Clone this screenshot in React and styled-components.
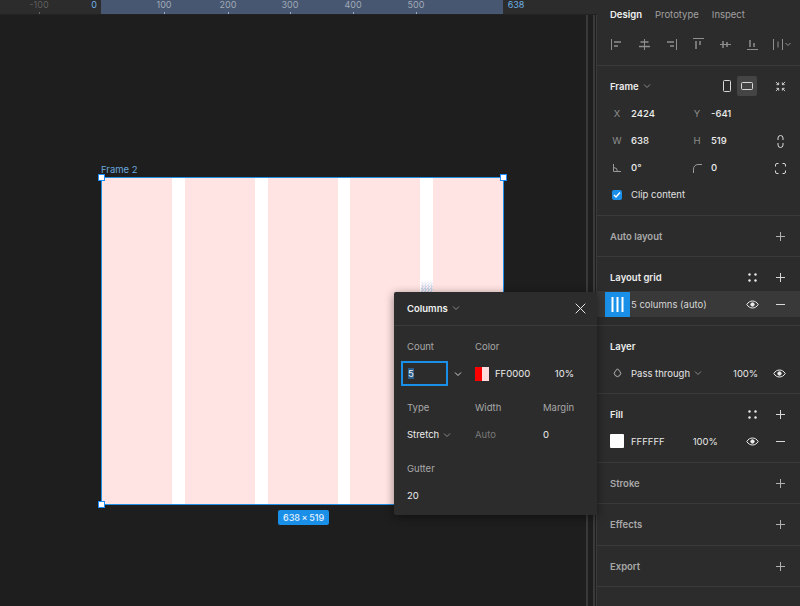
import React from "react";
import styled, { createGlobalStyle } from "styled-components";

const GlobalStyle = createGlobalStyle`
  html, body { margin: 0; padding: 0; background: #1e1e1e; }
  body { font-family: Inter, "Liberation Sans", sans-serif; font-size: 9.5px; }
`;

const Screen = styled.div`
  width: 800px;
  height: 606px;
  display: flex;
  overflow: hidden;
  position: relative;
  background: #1e1e1e;
`;

const Workspace = styled.div`
  width: 597px;
  flex: none;
  display: flex;
  flex-direction: column;
`;

const Ruler = styled.div`
  height: 15px;
  flex: none;
  box-sizing: border-box;
  background: #2c2c2c;
  border-bottom: 1px solid #222;
  position: relative;
`;

const RulerSpan = styled.div`
  position: absolute;
  left: 101px;
  width: 402px;
  top: 0;
  bottom: 0;
  background: #475771;
`;

const Tick = styled.span`
  position: absolute;
  top: 0;
  transform: translateX(-50%);
  font-size: 9px;
  line-height: 9px;
  color: ${(p) => (p.$blue ? "#6eb1e8" : p.$inner ? "#a0a9b6" : "#5f5f5f")};
`;

const TickMark = styled.i`
  position: absolute;
  bottom: 0;
  width: 1px;
  height: 2px;
  background: ${(p) => (p.$inner ? "#a4acb9" : "#666")};
`;

const WorkBody = styled.div`
  flex: 1;
  display: flex;
`;

const Canvas = styled.div`
  flex: 1;
  position: relative;
`;

const FrameName = styled.div`
  position: absolute;
  left: 101px;
  top: 149px;
  font-size: 9.5px;
  line-height: 12px;
  color: #6aa6dc;
`;

const Frame = styled.div`
  position: absolute;
  left: 101px;
  top: 162px;
  width: 403px;
  height: 328px;
  box-sizing: border-box;
  display: flex;
  justify-content: space-between;
  background: #fff;
  border: 1px solid #1f8fe8;
`;

const GridColumn = styled.div`
  width: 70px;
  background: #ffe4e3;
`;

const Handle = styled.span`
  position: absolute;
  width: 5px;
  height: 5px;
  background: #fff;
  border: 1px solid #1a8cff;
  ${(p) => (p.$top ? "top: -4px;" : "bottom: -4px;")}
  ${(p) => (p.$left ? "left: -4px;" : "right: -4px;")}
`;

const CursorSpeck = styled.span`
  position: absolute;
  left: 421px;
  top: 265px;
  width: 12px;
  height: 12px;
  background: repeating-conic-gradient(#c4d6ea 0 25%, #ffe9ef 0 50%) 0 0 / 3px 3px;
  mask-image: linear-gradient(transparent, #000 70%);
`;

const SizeBadge = styled.div`
  position: absolute;
  left: 278px;
  top: 495px;
  height: 15px;
  padding: 0 5px;
  border-radius: 2px;
  background: #1a8fe8;
  color: #e4f1fc;
  font-size: 9px;
  line-height: 15px;
  font-weight: 500;
  white-space: nowrap;
`;

const ScrollGutter = styled.div`
  width: 11px;
  flex: none;
  display: flex;
  justify-content: space-between;
  border-left: 2px solid #3a3a3a;
  border-right: 1px solid #3a3a3a;
  box-sizing: border-box;
  padding-left: 5px;
`;

const ScrollRail = styled.i`
  width: 2px;
  background: #3a3a3a;
`;

const Panel = styled.aside`
  width: 203px;
  flex: none;
  background: #2c2c2c;
  color: #e6e6e6;
  display: flex;
  flex-direction: column;
`;

const Tabs = styled.div`
  display: flex;
  gap: 13px;
  height: 28px;
  padding-left: 13px;
  align-items: center;
`;

const Tab = styled.span`
  color: ${(p) => (p.$active ? "#f2f2f2" : "#a0a0a0")};
  font-weight: ${(p) => (p.$active ? 600 : 400)};
`;

const AlignRow = styled.div`
  height: 38px;
  box-sizing: border-box;
  display: flex;
  align-items: center;
  gap: 14px;
  padding: 0 0 5px 14px;
  border-bottom: 1px solid #3a3a3a;
`;

const Section = styled.section`
  height: ${(p) => p.$h}px;
  box-sizing: border-box;
  flex: none;
  border-bottom: 1px solid #3a3a3a;
`;

const SectionHead = styled.div`
  height: 40px;
  box-sizing: border-box;
  display: flex;
  align-items: center;
  padding: 0 14px 0 13px;
  font-weight: 600;
  color: ${(p) => (p.$muted ? "#a8a8a8" : "#ededed")};
`;

const ListHead = styled(SectionHead)`
  height: 34px;
  padding-top: 6px;
`;

const HeadIcons = styled.div`
  margin-left: auto;
  display: flex;
  gap: ${(p) => p.$gap || 18}px;
  align-items: center;
`;

const FrameHead = styled(SectionHead)`
  height: 41px;
  padding-bottom: 1px;
  gap: 4px;
`;

const FrameButtons = styled.div`
  display: flex;
`;

const FrameButton = styled.span`
  width: 20px;
  height: 20px;
  display: flex;
  align-items: center;
  justify-content: center;
  border-radius: 2px;
  background: ${(p) => (p.$on ? "#444" : "transparent")};
`;

const PropGrid = styled.div`
  display: grid;
  grid-template-columns: 14px 52px 14px 54px 16px;
  column-gap: 7px;
  row-gap: 13px;
  align-items: center;
  padding: 0 0 0 13px;
`;

const PropLetter = styled.span`
  color: #8e8e8e;
  height: 14px;
  line-height: 14px;
  display: flex;
  align-items: center;
  justify-content: center;
`;

const PropValue = styled.span`
  color: #ececec;
  height: 14px;
  line-height: 14px;
  font-weight: 500;
`;

const PropIcon = styled.span`
  display: flex;
  justify-content: center;
  align-items: center;
  height: 14px;
`;

const ClipRow = styled.label`
  display: flex;
  gap: 9px;
  align-items: center;
  margin: 13px 0 0 15px;
  color: #e0e0e0;
  line-height: 14px;
`;

const Checkbox = styled.span`
  width: 10px;
  height: 10px;
  border-radius: 2px;
  background: #1a8fe8;
  display: flex;
  align-items: center;
  justify-content: center;
`;

const GridRow = styled.div`
  height: 26px;
  display: flex;
  align-items: center;
  background: #393939;
  padding-right: 14px;
  color: #d6d6d6;
`;

const GridThumb = styled.span`
  width: 25px;
  height: 25px;
  margin-left: 8px;
  margin-right: 1px;
  background: #1a8fe8;
  display: flex;
  align-items: center;
  justify-content: center;
`;

const ValueRow = styled.div`
  height: 26px;
  display: flex;
  align-items: center;
  padding: 0 14px 0 13px;
  color: #e6e6e6;
`;

const LeadSlot = styled.span`
  width: 14px;
  margin-right: 7px;
  display: flex;
  justify-content: center;
`;

const FillSwatch = styled.span`
  width: 14px;
  height: 14px;
  background: #fff;
  border-radius: 1px;
  margin-right: 7px;
`;

const Pct = styled.span`
  margin-left: ${(p) => p.$gap}px;
`;

const RowInner = styled.div`
  flex: 1;
  display: flex;
  align-items: center;
  gap: 4px;
`;

const Popover = styled.div`
  position: absolute;
  left: 394px;
  top: 292px;
  width: 203px;
  height: 223px;
  box-sizing: border-box;
  background: #2c2c2c;
  border-radius: 2px;
  box-shadow: 0 2px 10px rgba(0, 0, 0, 0.45);
  color: #e6e6e6;
`;

const PopHead = styled.div`
  height: 34px;
  box-sizing: border-box;
  display: flex;
  align-items: center;
  gap: 4px;
  padding: 0 11px 1px 13px;
  border-bottom: 1px solid #3a3a3a;
  font-weight: 600;
  color: #f0f0f0;
`;

const PopClose = styled.span`
  margin-left: auto;
  display: flex;
`;

const PopGrid = styled.div`
  display: grid;
  grid-template-columns: 68px 68px 1fr;
  padding: 14px 0 0 13px;
  grid-auto-rows: 27px 34px;
  align-items: start;
`;

const PopLabel = styled.span`
  color: #a8a8a8;
  line-height: 14px;
`;

const PopValue = styled.span`
  display: flex;
  align-items: center;
  gap: 4px;
  line-height: 14px;
  color: ${(p) => (p.$dim ? "#7a7a7a" : "#ececec")};
`;

const CountField = styled.div`
  width: 47px;
  height: 25px;
  margin: -6px 0 0 -6px;
  box-sizing: border-box;
  border: 2px solid #1a8fe8;
  padding: 4px 0 0 5px;
  line-height: 14px;
  color: #f0f0f0;
`;

const Selected = styled.span`
  background: #2a5d8a;
`;

const CountRow = styled.div`
  display: flex;
  align-items: flex-start;
  gap: 6px;
`;

const CaretSlot = styled.span`
  margin-top: 3px;
  display: flex;
`;

const ColorSwatch = styled.span`
  width: 14px;
  height: 14px;
  flex: none;
  margin-right: 2px;
  background: linear-gradient(90deg, #ff0000 50%, #ffdcdc 50%);
`;

const ColorValue = styled(PopValue)`
  grid-column: 2 / 4;
  width: 99px;
`;

const ColorPct = styled.span`
  margin-left: auto;
`;

const Stroke = styled.svg`
  display: block;
  flex: none;
  fill: none;
  stroke: ${(p) => p.$c || "#d8d8d8"};
  stroke-width: 1;
`;

const Caret = ({ c = "#8a8a8a" }) => (
  <Stroke $c={c} width="8" height="8" viewBox="0 0 8 8"><path d="M1 2.500l3 3 3-3" /></Stroke>
);
const Plus = ({ c }) => (
  <Stroke $c={c} width="11" height="11" viewBox="0 0 11 11"><path d="M5.500 1v9M1 5.500h9" /></Stroke>
);
const Minus = () => (
  <Stroke width="11" height="11" viewBox="0 0 11 11"><path d="M1 5.500h9" /></Stroke>
);
const Eye = () => (
  <Stroke $c="#ececec" width="13" height="9" viewBox="0 0 13 9">
    <path d="M.8 4.500C2.200 2.200 4.200 1 6.500 1s4.300 1.200 5.700 3.500C10.800 6.800 8.800 8 6.500 8S2.200 6.800.8 4.500z" />
    <circle cx="6.500" cy="4.500" r="1.700" fill="#ececec" />
  </Stroke>
);
const Dots = () => (
  <Stroke width="9" height="9" viewBox="0 0 9 9">
    <g fill="#ececec" stroke="none">
      <circle cx="1.500" cy="1.500" r="1.200" />
      <circle cx="7.500" cy="1.500" r="1.200" />
      <circle cx="1.500" cy="7.500" r="1.200" />
      <circle cx="7.500" cy="7.500" r="1.200" />
    </g>
  </Stroke>
);

const AlignIcon = ({ line, bars }) => (
  <Stroke $c="#8f8f8f" width="13" height="13" viewBox="0 0 13 13">
    <path d={line} />
    <path d={bars} strokeWidth="1.500" />
  </Stroke>
);

const alignIcons = [
  { line: "M.5 1v11", bars: "M3 4h7M3 8h4" },
  { line: "M6.500 1v11", bars: "M2.500 4h8M1 8.500h11" },
  { line: "M11.500 1v11", bars: "M2 4h7M5 8h4" },
  { line: "M1 .5h11", bars: "M4 3v8M8 3v4" },
  { line: "M1 6.500h11", bars: "M4 3v7M8 4v5" },
  { line: "M1 11.500h11", bars: "M4 2v7M8 5v4" },
];

const columns = [0, 1, 2, 3, 4];
const ticks = [
  { x: 39, t: "-100" },
  { x: 94, t: "0", blue: true },
  { x: 164, t: "100", inner: true },
  { x: 228, t: "200", inner: true },
  { x: 290, t: "300", inner: true },
  { x: 353, t: "400", inner: true },
  { x: 416, t: "500", inner: true },
  { x: 516, t: "638", blue: true },
];

export default function App() {
  return (
    <Screen>
      <GlobalStyle />
      <Workspace>
        <Ruler>
          <RulerSpan />
          {ticks.map((k) => (
            <Tick key={k.t} $blue={k.blue} $inner={k.inner} style={{ left: k.x }}>{k.t}</Tick>
          ))}
          {ticks.filter((k) => !k.blue).map((k) => (
            <TickMark key={k.t} $inner={k.inner} style={{ left: k.x }} />
          ))}
        </Ruler>
        <WorkBody>
          <Canvas>
            <FrameName>Frame 2</FrameName>
            <Frame>
              {columns.map((c) => <GridColumn key={c} />)}
              <Handle $top $left />
              <Handle $top />
              <Handle $left />
              <Handle />
            </Frame>
            <CursorSpeck />
            <SizeBadge>638{"\u2009"}×{"\u2009"}519</SizeBadge>
          </Canvas>
          <ScrollGutter><ScrollRail /></ScrollGutter>
        </WorkBody>
      </Workspace>
      <Panel>
        <Tabs>
          <Tab $active>Design</Tab>
          <Tab>Prototype</Tab>
          <Tab>Inspect</Tab>
        </Tabs>
        <AlignRow>
          {alignIcons.map((a) => <AlignIcon key={a.line} line={a.line} bars={a.bars} />)}
          <Stroke $c="#8f8f8f" width="18" height="13" viewBox="0 0 18 13">
            <path d="M.5 1v11M9.500 1v11M5 3.500v6M12.500 5l2.500 2.500L17.500 5" />
          </Stroke>
        </AlignRow>

        <Section $h={150}>
          <FrameHead>
            Frame <Caret />
            <HeadIcons>
              <FrameButtons>
                <FrameButton>
                  <Stroke width="8" height="12" viewBox="0 0 8 12"><rect x=".5" y=".5" width="7" height="11" rx="1" /></Stroke>
                </FrameButton>
                <FrameButton $on>
                  <Stroke width="12" height="8" viewBox="0 0 12 8"><rect x=".5" y=".5" width="11" height="7" rx="1" /></Stroke>
                </FrameButton>
              </FrameButtons>
              <Stroke width="11" height="11" viewBox="0 0 12 12">
                <path d="M1 1l3 3M4 1.500V4H1.500M11 1L8 4M8 1.500V4h2.500M1 11l3-3M1.500 8H4v2.500M11 11L8 8M10.500 8H8v2.500" />
              </Stroke>
            </HeadIcons>
          </FrameHead>
          <PropGrid>
            <PropLetter>X</PropLetter><PropValue>2424</PropValue>
            <PropLetter>Y</PropLetter><PropValue>-641</PropValue><span />
            <PropLetter>W</PropLetter><PropValue>638</PropValue>
            <PropLetter>H</PropLetter><PropValue>519</PropValue>
            <PropIcon>
              <Stroke width="7" height="13" viewBox="0 0 7 13"><path d="M1 5V3a2.500 2.500 0 015 0v2M1 8v2a2.500 2.500 0 005 0V8" /></Stroke>
            </PropIcon>
            <PropLetter>
              <Stroke $c="#9a9a9a" width="8" height="8" viewBox="0 0 8 8"><path d="M.5 0v7.500H8M.5 3.500a4 4 0 014 4" /></Stroke>
            </PropLetter>
            <PropValue>0°</PropValue>
            <PropLetter>
              <Stroke $c="#9a9a9a" width="9" height="9" viewBox="0 0 9 9"><path d="M.5 9V5a4.500 4.500 0 014.500-4.500H9" /></Stroke>
            </PropLetter>
            <PropValue>0</PropValue>
            <PropIcon>
              <Stroke width="11" height="11" viewBox="0 0 11 11"><path d="M.5 3.500V2A1.500 1.500 0 012 .5h1.500M7.500 .5H9A1.500 1.500 0 0110.500 2v1.500M10.500 7.500V9A1.500 1.500 0 019 10.500H7.500M3.500 10.500H2A1.500 1.500 0 01.500 9V7.500" /></Stroke>
            </PropIcon>
          </PropGrid>
          <ClipRow>
            <Checkbox>
              <Stroke $c="#fff" width="8" height="8" viewBox="0 0 8 8"><path d="M1 4l2 2 4-4.500" strokeWidth="1.400" /></Stroke>
            </Checkbox>
            Clip content
          </ClipRow>
        </Section>

        <Section $h={41}>
          <SectionHead $muted>Auto layout<HeadIcons><Plus c="#b0b0b0" /></HeadIcons></SectionHead>
        </Section>

        <Section $h={69}>
          <ListHead>Layout grid<HeadIcons><Dots /><Plus /></HeadIcons></ListHead>
          <GridRow>
            <GridThumb>
              <Stroke $c="#fff" width="13" height="15" viewBox="0 0 13 15"><path d="M1.500 0v15M6.500 0v15M11.500 0v15" strokeWidth="2" /></Stroke>
            </GridThumb>
            5 columns (auto)
            <HeadIcons $gap={16}><Eye /><Minus /></HeadIcons>
          </GridRow>
        </Section>

        <Section $h={68}>
          <ListHead>Layer</ListHead>
          <ValueRow>
            <LeadSlot>
              <Stroke $c="#b8b8b8" width="9" height="10" viewBox="0 0 9 10"><path d="M4.500 .8L2.300 3.200a3.100 3.100 0 104.400 0z" /></Stroke>
            </LeadSlot>
            <RowInner>
              Pass through <Caret />
              <Pct $gap={27}>100%</Pct>
            </RowInner>
            <Eye />
          </ValueRow>
        </Section>

        <Section $h={69}>
          <ListHead>Fill<HeadIcons><Dots /><Plus /></HeadIcons></ListHead>
          <ValueRow>
            <FillSwatch />
            <RowInner>
              FFFFFF
              <Pct $gap={24}>100%</Pct>
              <HeadIcons $gap={16}><Eye /><Minus /></HeadIcons>
            </RowInner>
          </ValueRow>
        </Section>

        <Section $h={41}>
          <SectionHead $muted>Stroke<HeadIcons><Plus c="#b0b0b0" /></HeadIcons></SectionHead>
        </Section>
        <Section $h={42}>
          <SectionHead $muted>Effects<HeadIcons><Plus c="#b0b0b0" /></HeadIcons></SectionHead>
        </Section>
        <Section $h={41}>
          <SectionHead $muted>Export<HeadIcons><Plus c="#b0b0b0" /></HeadIcons></SectionHead>
        </Section>
      </Panel>

      <Popover>
        <PopHead>
          Columns <Caret />
          <PopClose>
            <Stroke $c="#e6e6e6" width="11" height="11" viewBox="0 0 11 11"><path d="M.7.7l9.600 9.600M10.300.7L.7 10.300" /></Stroke>
          </PopClose>
        </PopHead>
        <PopGrid>
          <PopLabel>Count</PopLabel>
          <PopLabel>Color</PopLabel>
          <span />
          <CountRow>
            <CountField><Selected>5</Selected></CountField>
            <CaretSlot><Caret c="#d0d0d0" /></CaretSlot>
          </CountRow>
          <ColorValue>
            <ColorSwatch />
            FF0000
            <ColorPct>10%</ColorPct>
          </ColorValue>
          <PopLabel>Type</PopLabel>
          <PopLabel>Width</PopLabel>
          <PopLabel>Margin</PopLabel>
          <PopValue>Stretch <Caret /></PopValue>
          <PopValue $dim>Auto</PopValue>
          <PopValue>0</PopValue>
          <PopLabel>Gutter</PopLabel>
          <span />
          <span />
          <PopValue>20</PopValue>
        </PopGrid>
      </Popover>
    </Screen>
  );
}
